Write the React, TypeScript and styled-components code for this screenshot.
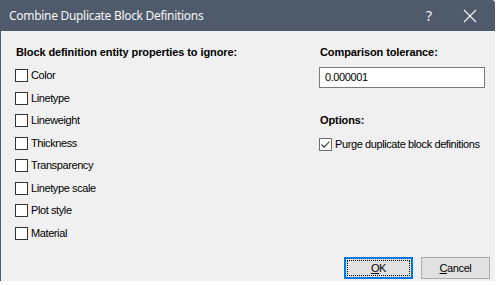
import styled, { createGlobalStyle } from 'styled-components';

const GlobalStyle = createGlobalStyle`
  html, body {
    margin: 0;
    padding: 0;
    background: #ffffff;
  }
`;

const ignoreProps = [
  'Color',
  'Linetype',
  'Lineweight',
  'Thickness',
  'Transparency',
  'Linetype scale',
  'Plot style',
  'Material',
];

function CheckBox({ checked }: { checked?: boolean }) {
  return (
    <Box $checked={checked}>
      {checked && (
        <svg width="11" height="11" viewBox="0 0 11 11">
          <path d="M1.5 5.5 L4.2 8.2 L9.5 2.5" fill="none" stroke="#333" strokeWidth="1.1" />
        </svg>
      )}
    </Box>
  );
}

function App() {
  return (
    <>
      <GlobalStyle />
      <Window>
        <TitleBar>
          <Title>Combine Duplicate Block Definitions</Title>
          <TitleButton>?</TitleButton>
          <CloseButton>
            <svg width="14" height="14" viewBox="0 0 14 14">
              <path d="M1 1 L13 13 M13 1 L1 13" stroke="#f4f6f8" strokeWidth="1.1" />
            </svg>
          </CloseButton>
        </TitleBar>
        <Body>
          <Columns>
            <Column>
              <Heading>Block definition entity properties to ignore:</Heading>
              <List>
                {ignoreProps.map((p) => (
                  <Row key={p}>
                    <CheckBox />
                    <Label>{p}</Label>
                  </Row>
                ))}
              </List>
            </Column>
            <Column>
              <Heading>Comparison tolerance:</Heading>
              <Input>0.000001</Input>
              <Heading $section>Options:</Heading>
              <Row>
                <CheckBox checked />
                <Label>Purge duplicate block definitions</Label>
              </Row>
            </Column>
          </Columns>
          <Footer>
            <Button $default>
              <FocusRing>
                <u>O</u>K
              </FocusRing>
            </Button>
            <Button>
              <u>C</u>ancel
            </Button>
          </Footer>
        </Body>
      </Window>
    </>
  );
}

export default App;

const Window = styled.div`
  width: 495px;
  height: 281px;
  display: flex;
  flex-direction: column;
  box-sizing: border-box;
  border-top-right-radius: 3px;
  overflow: hidden;
  border-left: 1px solid #4f5b6a;
`;

const TitleBar = styled.div`
  height: 31px;
  flex-shrink: 0;
  background: #4f5b6a;
  display: flex;
  align-items: center;
  padding-left: 8px;
  color: #f4f6f8;
`;

const Title = styled.div`
  flex: 1;
  font-family: 'Noto Sans', 'Open Sans', sans-serif;
  font-size: 12px;
  letter-spacing: -0.3px;
`;

const TitleButton = styled.div`
  width: 14px;
  margin-right: 27px;
  font-family: 'Noto Sans', sans-serif;
  font-size: 14px;
  text-align: center;
  padding-bottom: 1px;
`;

const CloseButton = styled.div`
  width: 14px;
  height: 14px;
  margin-right: 18px;
  display: flex;
`;

const Body = styled.div`
  flex: 1;
  background: #f0f0f0;
  display: flex;
  flex-direction: column;
  padding: 14px 5px 2px 14px;
  font-family: 'Liberation Sans', Arial, sans-serif;
  font-size: 11px;
  letter-spacing: -0.4px;
  color: #000;
`;

const Columns = styled.div`
  flex: 1;
  display: grid;
  grid-template-columns: 304px 166px;
`;

const Column = styled.div`
  display: flex;
  flex-direction: column;
  white-space: nowrap;
`;

const Heading = styled.div<{ $section?: boolean }>`
  font-weight: bold;
  letter-spacing: -0.1px;
  padding-left: 1px;
  height: 14px;
  line-height: 14px;
  margin-top: ${(p) => (p.$section ? '25px' : '0')};
  margin-bottom: ${(p) => (p.$section ? '11px' : '8px')};
`;

const List = styled.div`
  display: flex;
  flex-direction: column;
  gap: 9.57px;
  padding-top: 2px;
`;

const Row = styled.div`
  display: flex;
  align-items: center;
  height: 13px;
`;

const Box = styled.div<{ $checked?: boolean }>`
  width: 13px;
  height: 13px;
  box-sizing: border-box;
  border: 1px solid ${(p) => (p.$checked ? '#6d6d6d' : '#333333')};
  background: #ffffff;
  display: flex;
  align-items: center;
  justify-content: center;
  margin-right: 3px;
`;

const Label = styled.span`
  line-height: 13px;
`;

const Input = styled.div`
  height: 21px;
  box-sizing: border-box;
  border: 1px solid #7a7a7a;
  background: #ffffff;
  padding-left: 5px;
  line-height: 19px;
`;

const Footer = styled.div`
  display: flex;
  justify-content: flex-end;
  gap: 8px;
`;

const Button = styled.div<{ $default?: boolean }>`
  width: 69px;
  height: 22px;
  box-sizing: border-box;
  background: #e1e1e1;
  border: ${(p) => (p.$default ? '2px solid #0078d7' : '1px solid #adadad')};
  display: flex;
  align-items: center;
  justify-content: center;
  padding: ${(p) => (p.$default ? '1px' : '0')};

  u {
    text-decoration: underline;
  }
`;

const FocusRing = styled.div`
  width: 100%;
  height: 100%;
  box-sizing: border-box;
  border: 1px dotted #000;
  display: flex;
  align-items: center;
  justify-content: center;
`;
